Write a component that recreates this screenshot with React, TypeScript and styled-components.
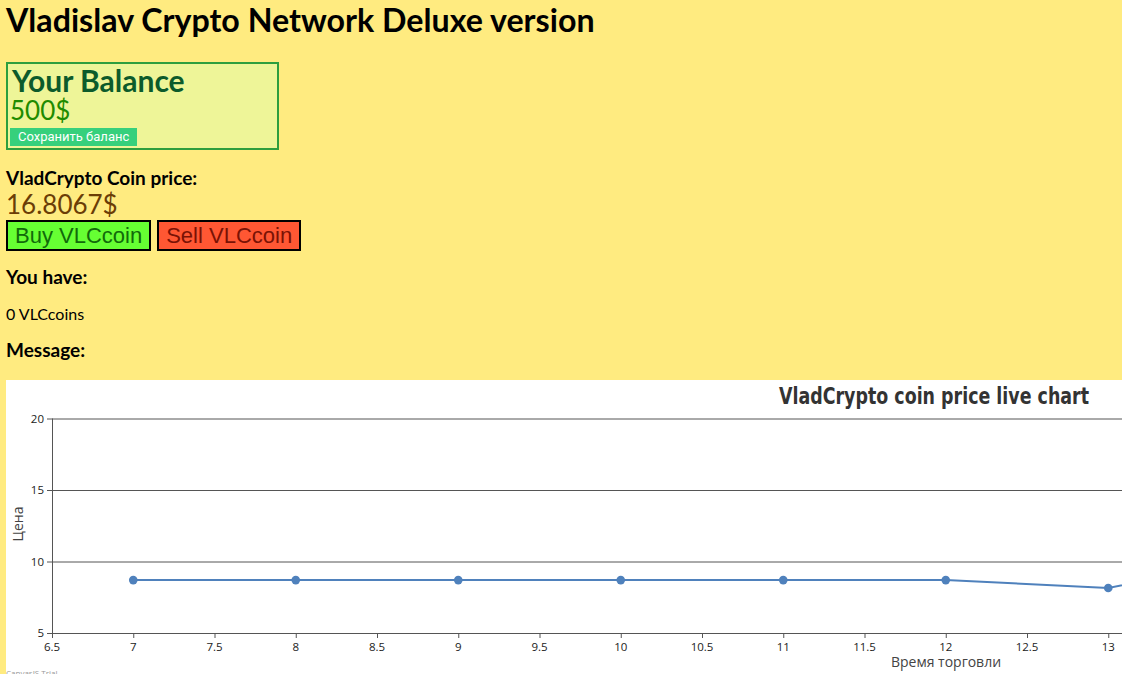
import React from "react";
import styled, { createGlobalStyle } from "styled-components";

const GlobalStyle = createGlobalStyle`
  html {
    overflow: hidden;
  }
  body {
    margin: 0;
    padding: 0 6px;
    background: #ffeb80;
    font-family: "Lato", "Open Sans", sans-serif;
    color: #000;
  }
`;

const Page = styled.div`
  display: flex;
  flex-direction: column;
  align-items: flex-start;
`;

const Title = styled.h1`
  margin: 0;
  font-size: 32.2px;
  line-height: 40px;
  font-weight: 700;
`;

const BalanceBox = styled.div`
  box-sizing: border-box;
  width: 273px;
  margin-top: 22px;
  padding: 0 2px 2px;
  border: 2px solid #2e9e3e;
  background: #eef598;
  display: flex;
  flex-direction: column;
  align-items: flex-start;
`;

const BalanceTitle = styled.h2`
  margin: 0 0 0 2px;
  font-size: 30px;
  line-height: 32px;
  font-weight: 700;
  color: #0c5b2b;
`;

const BigValue = styled.div<{ $color: string; $lh?: number }>`
  font-size: 26px;
  line-height: ${(p) => p.$lh ?? 30}px;
  color: ${(p) => p.$color};
`;

const SaveButton = styled.button`
  margin-top: 4px;
  height: 18px;
  padding: 0 8px;
  border: none;
  background: #36d07c;
  color: #fff;
  font-family: "Roboto", sans-serif;
  font-size: 13px;
  line-height: 18px;
`;

const Label = styled.div<{ $top: number }>`
  margin-top: ${(p) => p.$top}px;
  font-size: 19px;
  line-height: 22px;
  font-weight: 700;
`;

const CoinsText = styled.div`
  margin-top: 16px;
  font-size: 16px;
  line-height: 20px;
`;

const TradeRow = styled.div`
  display: flex;
  gap: 6px;
  margin-top: 1px;
`;

const TradeButton = styled.button<{ $bg: string; $fg: string }>`
  height: 31px;
  padding: 0 7px;
  border: 2px solid #000;
  background: ${(p) => p.$bg};
  color: ${(p) => p.$fg};
  font-family: "Liberation Sans", Arial, sans-serif;
  font-size: 22px;
  line-height: 27px;
`;

const ChartBox = styled.div`
  margin-top: 19px;
  width: 1200px;
  height: 300px;
  background: #fff;
`;

const xs = (t: number) => 46 + (t - 6.5) * 162.5;
const ys = (v: number) => 253 - (v - 5) * 14.3;

const points: [number, number][] = [
  [7, 8.7],
  [8, 8.7],
  [9, 8.7],
  [10, 8.7],
  [11, 8.7],
  [12, 8.7],
  [13, 8.15],
  [14, 10.4],
];

const xTicks = [6.5, 7, 7.5, 8, 8.5, 9, 9.5, 10, 10.5, 11, 11.5, 12, 12.5, 13];
const yTicks = [5, 10, 15, 20];

const PriceChart = () => (
  <svg width="1200" height="300" fontFamily="'Open Sans', 'Noto Sans', sans-serif">
    <text
      x="773"
      y="24"
      textLength="310"
      lengthAdjust="spacingAndGlyphs"
      fontFamily="Impact, 'DejaVu Sans', sans-serif"
      fontWeight="700"
      fontSize="23"
      fill="#333"
    >
      VladCrypto coin price live chart
    </text>
    {yTicks.map((v) => (
      <g key={v}>
        <line x1="41" x2="1200" y1={ys(v) + 0.5} y2={ys(v) + 0.5} stroke="#555" strokeWidth="1" />
        <text x="38" y={ys(v) + 4} textAnchor="end" fontSize="11.5" fill="#222">
          {v}
        </text>
      </g>
    ))}
    <line x1="46.5" x2="46.5" y1={ys(20)} y2={ys(5) + 1} stroke="#555" strokeWidth="1" />
    {xTicks.map((t) => (
      <g key={t}>
        <line x1={xs(t) + 0.5} x2={xs(t) + 0.5} y1={ys(5)} y2={ys(5) + 5} stroke="#555" strokeWidth="1" />
        <text x={xs(t)} y={ys(5) + 18} textAnchor="middle" fontSize="11.5" fill="#222">
          {t}
        </text>
      </g>
    ))}
    <text
      x="0"
      y="0"
      transform="translate(17 144) rotate(-90)"
      textAnchor="middle"
      fontSize="14"
      fill="#444"
    >
      Цена
    </text>
    <text x="940" y="287" textAnchor="middle" fontSize="14" fill="#444">
      Время торговли
    </text>
    <polyline
      points={points.map(([t, v]) => `${xs(t)},${ys(v)}`).join(" ")}
      fill="none"
      stroke="#4f81bc"
      strokeWidth="2"
    />
    {points.map(([t, v]) => (
      <circle key={t} cx={xs(t)} cy={ys(v)} r="4.3" fill="#4f81bc" />
    ))}
    <text x="0" y="296" fontSize="8" fill="#999">
      CanvasJS Trial
    </text>
  </svg>
);

export default function App() {
  return (
    <>
      <GlobalStyle />
      <Page>
        <Title>Vladislav Crypto Network Deluxe version</Title>
        <BalanceBox>
          <BalanceTitle>Your Balance</BalanceTitle>
          <BigValue $color="#1f8b00" $lh={28}>
            500$
          </BigValue>
          <SaveButton>Сохранить баланс</SaveButton>
        </BalanceBox>
        <Label $top={17}>VladCrypto Coin price:</Label>
        <BigValue $color="#6b3d06">16.8067$</BigValue>
        <TradeRow>
          <TradeButton $bg="#66ff33" $fg="#116a0a">
            Buy VLCcoin
          </TradeButton>
          <TradeButton $bg="#ff5733" $fg="#7a1205">
            Sell VLCcoin
          </TradeButton>
        </TradeRow>
        <Label $top={15}>You have:</Label>
        <CoinsText>0 VLCcoins</CoinsText>
        <Label $top={15}>Message:</Label>
        <ChartBox>
          <PriceChart />
        </ChartBox>
      </Page>
    </>
  );
}
